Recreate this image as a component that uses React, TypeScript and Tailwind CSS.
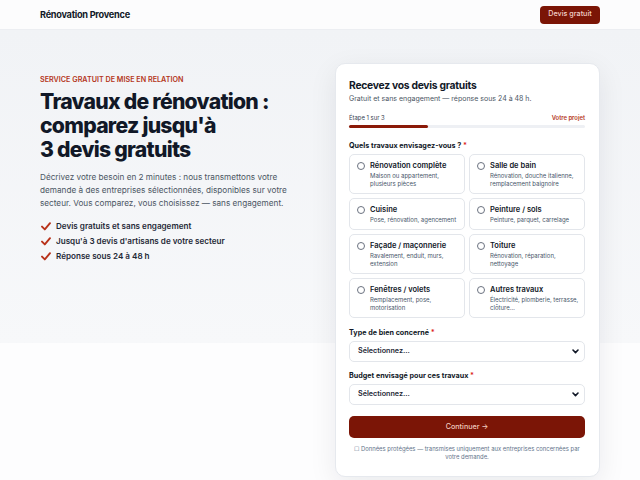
import React from "react";

const options = [
  { title: "Rénovation complète", desc: "Maison ou appartement, plusieurs pièces" },
  { title: "Salle de bain", desc: "Rénovation, douche italienne, remplacement baignoire" },
  { title: "Cuisine", desc: "Pose, rénovation, agencement" },
  { title: "Peinture / sols", desc: "Peinture, parquet, carrelage" },
  { title: "Façade / maçonnerie", desc: "Ravalement, enduit, murs, extension" },
  { title: "Toiture", desc: "Rénovation, réparation, nettoyage" },
  { title: "Fenêtres / volets", desc: "Remplacement, pose, motorisation" },
  { title: "Autres travaux", desc: "Électricité, plomberie, terrasse, clôture…" },
];

const perks = [
  "Devis gratuits et sans engagement",
  "Jusqu'à 3 devis d'artisans de votre secteur",
  "Réponse sous 24 à 48 h",
];

function Check() {
  return (
    <svg width="10" height="9" viewBox="0 0 10 9" className="shrink-0">
      <path d="M1 4.6 L3.8 7.4 L9 1.2" fill="none" stroke="#b8321a" strokeWidth="1.9" strokeLinecap="round" strokeLinejoin="round" />
    </svg>
  );
}

function Chevron() {
  return (
    <svg width="7" height="5" viewBox="0 0 7 5">
      <path d="M1 1 L3.5 3.6 L6 1" fill="none" stroke="#111827" strokeWidth="1.6" strokeLinecap="round" strokeLinejoin="round" />
    </svg>
  );
}

function SelectBox() {
  return (
    <div className="mt-[2px] flex h-[21px] items-center justify-between rounded-[5px] border border-[#e3e6eb] bg-white pl-[8px] pr-[5px]">
      <span className="text-[7.2px] font-semibold text-[#1f2937]">Sélectionnez...</span>
      <Chevron />
    </div>
  );
}

export default function App() {
  return (
    <div className="min-h-[480px] bg-[#fdfdfe] font-['Inter',sans-serif] text-[#111827]">
      <header className="h-[30px] border-b border-[#eceef2] bg-[#fcfcfd]">
        <div className="mx-auto flex h-full w-[560px] items-center justify-between">
          <span className="text-[9.2px] font-bold tracking-[-0.03em] text-[#111827]">Rénovation Provence</span>
          <button className="flex h-[18px] w-[60px] items-center justify-center rounded-[4px] bg-[#7b1506] text-[7.2px] font-medium text-[#f3d3cb]">
            Devis gratuit
          </button>
        </div>
      </header>

      <section className="h-[313px] bg-gradient-to-b from-[#f1f3f6] to-[#f7f8fa]">
        <div className="mx-auto grid w-[560px] grid-cols-2 gap-[30px] pt-[33px]">
          <div className="pt-[12px]">
            <p className="text-[7.2px] font-semibold uppercase leading-[10px] text-[#b4361b]">
              Service gratuit de mise en relation
            </p>
            <h1 className="mt-[4px] text-[21.2px] font-extrabold leading-[24px] tracking-[-0.035em] text-[#111827]">
              Travaux de rénovation :<br />
              comparez jusqu'à<br />
              3 devis gratuits
            </h1>
            <p className="mt-[10px] text-[8.2px] leading-[13px] text-[#4b5563]">
              Décrivez votre besoin en 2 minutes : nous transmettons votre demande à des entreprises sélectionnées, disponibles sur votre secteur. Vous comparez, vous choisissez — sans engagement.
            </p>
            <ul className="mt-[11px] flex flex-col gap-[5px]">
              {perks.map((p) => (
                <li key={p} className="flex h-[10px] items-center gap-[5px] pl-[1px]">
                  <Check />
                  <span className="text-[8.1px] font-semibold text-[#1f2937]">{p}</span>
                </li>
              ))}
            </ul>
          </div>

          <div className="rounded-[10px] border border-[#e6e9ee] bg-white pb-[15px] pl-[13px] pr-[14px] pt-[13px] shadow-[0_8px_28px_rgba(15,23,42,0.08)]">
            <h2 className="text-[10.3px] font-bold leading-[16px] tracking-[-0.025em] text-[#111827]">Recevez vos devis gratuits</h2>
            <p className="text-[7px] leading-[12px] text-[#4b5563]">Gratuit et sans engagement — réponse sous 24 à 48 h.</p>

            <div className="mt-[8px] flex items-center justify-between text-[5.9px] leading-[9px]">
              <span className="text-[#374151]">Étape 1 sur 3</span>
              <span className="font-semibold text-[#b4361b]">Votre projet</span>
            </div>
            <div className="mt-[3px] h-[3px] rounded-full bg-[#eef0f4]">
              <div className="h-full w-1/3 rounded-full bg-[#8b1a08]" />
            </div>

            <p className="mt-[12px] text-[7.2px] font-bold leading-[12px] text-[#111827]">
              Quels travaux envisagez-vous ? <span className="text-[#dc2626]">*</span>
            </p>
            <div className="mt-[2px] grid grid-cols-2 gap-[4px]">
              {options.map((o) => (
                <div key={o.title} className="flex gap-[5px] rounded-[5px] border border-[#e3e6eb] bg-white pb-[5px] pl-[7px] pr-[3px] pt-[5px]">
                  <span className="mt-[2px] h-[8px] w-[8px] shrink-0 rounded-full border border-[#6b7280] bg-white" />
                  <div className="min-w-0">
                    <div className="text-[7.5px] font-semibold leading-[12px] text-[#111827]">{o.title}</div>
                    <div className="text-[6px] leading-[8px] text-[#475569]">{o.desc}</div>
                  </div>
                </div>
              ))}
            </div>

            <p className="mt-[9px] text-[7.2px] font-bold leading-[12px] text-[#111827]">
              Type de bien concerné <span className="text-[#dc2626]">*</span>
            </p>
            <SelectBox />

            <p className="mt-[8px] text-[7.2px] font-bold leading-[12px] text-[#111827]">
              Budget envisagé pour ces travaux <span className="text-[#dc2626]">*</span>
            </p>
            <SelectBox />

            <button className="mt-[11px] flex h-[22px] w-full items-center justify-center rounded-[5px] bg-[#7b1506] text-[7.2px] font-medium text-[#f0c9bf]">
              Continuer →
            </button>

            <p className="mt-[7px] text-center text-[5.9px] leading-[8px] text-[#64748b]">
              ☐ Données protégées — transmises uniquement aux entreprises concernées par votre demande.
            </p>
          </div>
        </div>
      </section>
    </div>
  );
}
